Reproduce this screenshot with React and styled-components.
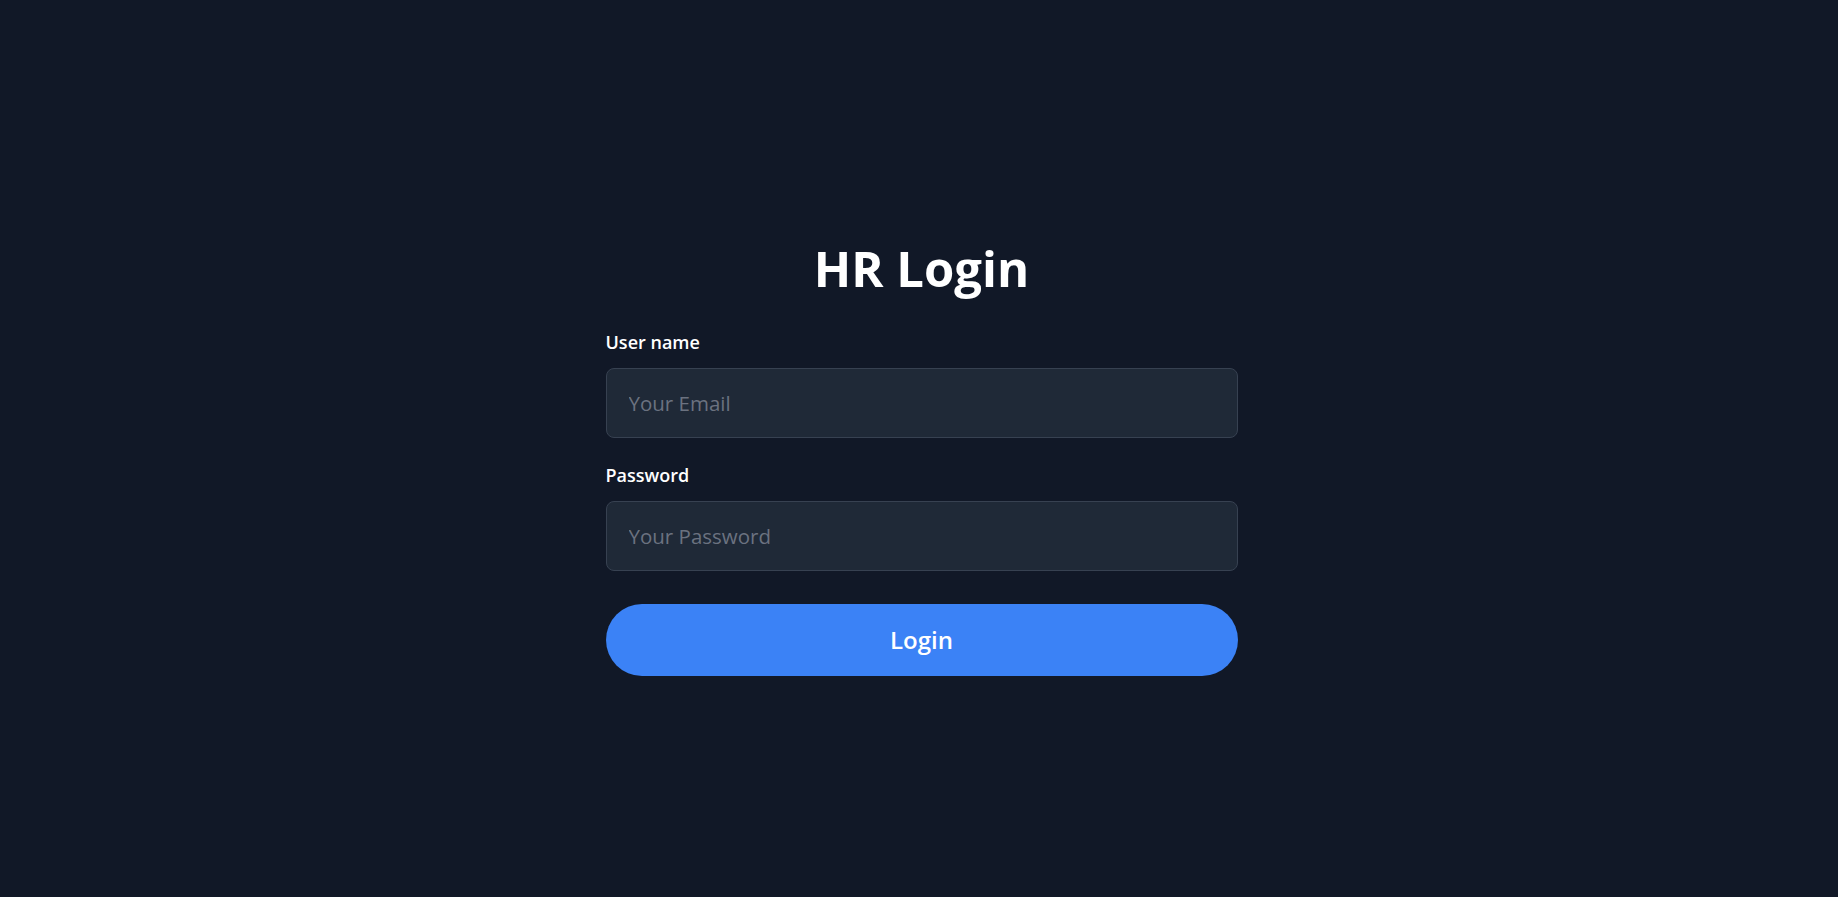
import React from "react";
import styled, { createGlobalStyle } from "styled-components";

const Global = createGlobalStyle`
  * { box-sizing: border-box; }
  html, body { margin: 0; padding: 0; background: #111827; }
  body { font-family: "Segoe UI", "Open Sans", "Noto Sans", sans-serif; }
`;

const Page = styled.main`
  min-height: 100vh;
  background: #111827;
  padding: 244px 0 0 5px;
`;

const Card = styled.form`
  max-width: 672px;
  margin: 0 auto;
  padding: 0 20px;
  display: flex;
  flex-direction: column;
`;

const Title = styled.h1`
  margin: 0 0 36px;
  font-size: 49px;
  line-height: 48px;
  font-weight: 700;
  color: #ffffff;
  text-align: center;
`;

const Field = styled.div`
  display: flex;
  flex-direction: column;
  margin-bottom: ${(p) => p.$gap}px;
`;

const Label = styled.label`
  font-size: 18px;
  line-height: 28px;
  font-weight: 600;
  color: #ffffff;
  margin-bottom: 12px;
`;

const Input = styled.input`
  width: 100%;
  height: 70px;
  padding: 20px 22px;
  font-family: inherit;
  font-size: 20.5px;
  line-height: 28px;
  color: #ffffff;
  background: #1f2937;
  border: 1px solid #374151;
  border-radius: 8px;
  outline: none;
  &::placeholder { color: #6b7280; }
`;

const Button = styled.button`
  width: 100%;
  height: 72px;
  border: none;
  border-radius: 9999px;
  background: #3b82f6;
  color: #ffffff;
  font-family: inherit;
  font-size: 24px;
  line-height: 32px;
  font-weight: 600;
  cursor: pointer;
`;

export default function App() {
  return (
    <>
      <Global />
      <Page>
        <Card onSubmit={(e) => e.preventDefault()}>
          <Title>HR Login</Title>
          <Field $gap={23}>
            <Label htmlFor="email">User name</Label>
            <Input id="email" type="email" placeholder="Your Email" />
          </Field>
          <Field $gap={33}>
            <Label htmlFor="password">Password</Label>
            <Input id="password" type="password" placeholder="Your Password" />
          </Field>
          <Button type="submit">Login</Button>
        </Card>
      </Page>
    </>
  );
}
